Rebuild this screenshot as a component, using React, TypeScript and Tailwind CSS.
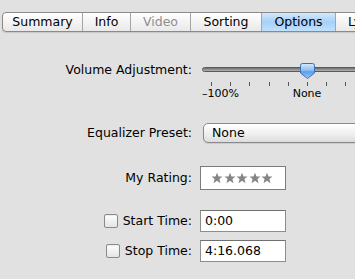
import React from "react";

const tabs = [
  { label: "Summary", w: "w-[80px]" },
  { label: "Info", w: "w-[48px]" },
  { label: "Video", w: "w-[60px]", disabled: true },
  { label: "Sorting", w: "w-[71px]" },
  { label: "Options", w: "w-[74px]", active: true },
  { label: "Lyrics", w: "w-[60px]" },
];

const Label = ({ children }: { children: React.ReactNode }) => (
  <div className="w-[192px] shrink-0 text-right leading-[16px]">{children}</div>
);

const Thumb = () => (
  <svg width="16" height="17" viewBox="0 0 16 17" className="absolute left-[98px] top-[1px]">
    <defs>
      <linearGradient id="thumb" x1="0" y1="0" x2="0" y2="1">
        <stop offset="0" stopColor="#d6e9fc" />
        <stop offset="0.45" stopColor="#8fc0f3" />
        <stop offset="0.55" stopColor="#5d9de8" />
        <stop offset="1" stopColor="#9ccbf7" />
      </linearGradient>
    </defs>
    <path
      d="M2.5 0.5 H12.5 Q14.5 0.5 14.5 2.5 V10 L7.5 15.5 L0.5 10 V2.5 Q0.5 0.5 2.5 0.5 Z"
      fill="url(#thumb)"
      stroke="#3d6db0"
      strokeWidth="1"
    />
  </svg>
);

const Star = () => (
  <svg width="12" height="12" viewBox="0 0 24 24" className="shrink-0">
    <path
      d="M12 1.5 L15 9 L23 9.2 L16.8 14.2 L19 22.3 L12 17.6 L5 22.3 L7.2 14.2 L1 9.2 L9 9 Z"
      fill="#858585"
    />
  </svg>
);

const VolumeSlider = () => {
  const ticks = Array.from({ length: 8 });
  return (
    <div className="relative h-[38px] w-[160px] shrink-0 ml-[10px]">
      <div className="mt-[5px] h-[5px] w-full rounded-full border border-[#5a5a5a] bg-gradient-to-b from-[#6e6e6e] to-[#b5b5b5]" />
      <div className="mt-[10px] ml-[9px] flex gap-[18.2px]">
        {ticks.map((_, i) => (
          <div key={i} className="h-[4px] w-[1px] bg-[#555]" />
        ))}
      </div>
      <span className="absolute left-[0px] top-[25px] text-[11px] leading-[13px]">–100%</span>
      <span className="absolute left-[105px] top-[25px] -translate-x-1/2 text-[11px] leading-[13px]">
        None
      </span>
      <Thumb />
    </div>
  );
};

const Checkbox = () => (
  <div className="h-[14px] w-[14px] shrink-0 rounded-[2px] border border-[#8a8a8a] bg-gradient-to-b from-white to-[#e4e4e4] shadow-[inset_0_1px_1px_rgba(0,0,0,0.08)]" />
);

const TimeField = ({ value }: { value: string }) => (
  <div className="ml-[8px] flex h-[22px] w-[86px] items-center border border-[#8d8d8d] border-t-[#6f6f6f] bg-white pl-[4px] leading-[16px]">
    {value}
  </div>
);

const App = () => {
  return (
    <div
      className="h-[279px] w-[355px] overflow-hidden bg-[#e1e1e1] text-[12.5px] text-black"
      style={{ fontFamily: '"Lucida Grande", "DejaVu Sans", sans-serif' }}
    >
      {/* tab strip */}
      <div className="ml-[2px] mt-[12px] flex h-[20px] w-[420px] overflow-hidden rounded-l-[4px] border border-[#8a8a8a] bg-gradient-to-b from-white to-[#e9e9e9] shadow-[0_1px_1px_rgba(0,0,0,0.12)]">
        {tabs.map((t) => (
          <div
            key={t.label}
            className={`${t.w} flex shrink-0 items-center justify-center border-r border-[#a5a5a5] leading-[16px] ${
              t.active ? "bg-gradient-to-b from-[#d3e8fd] via-[#a6d0f8] to-[#c2e0fc]" : ""
            } ${t.disabled ? "text-[#8e8e8e]" : ""}`}
          >
            {t.label}
          </div>
        ))}
      </div>

      {/* volume */}
      <div className="mt-[30px] flex items-start">
        <Label>Volume Adjustment:</Label>
        <VolumeSlider />
      </div>

      {/* equalizer */}
      <div className="mt-[23px] flex items-center">
        <Label>Equalizer Preset:</Label>
        <div className="ml-[11px] flex h-[20px] w-[170px] shrink-0 items-center rounded-l-[5px] border border-[#8a8a8a] bg-gradient-to-b from-white via-[#f1f1f1] to-[#dcdcdc] pl-[8px] leading-[16px] shadow-[0_1px_1px_rgba(0,0,0,0.1)]">
          None
        </div>
      </div>

      {/* rating */}
      <div className="mt-[23px] flex items-center">
        <Label>My Rating:</Label>
        <div className="ml-[8px] flex h-[24px] w-[86px] items-center gap-[0.6px] border border-[#7c7c7c] bg-white pl-[10px]">
          {[0, 1, 2, 3, 4].map((i) => (
            <Star key={i} />
          ))}
        </div>
      </div>

      {/* start / stop */}
      <div className="mt-[20px] flex items-center">
        <div className="flex w-[192px] shrink-0 items-center justify-end gap-[5px] leading-[16px]">
          <Checkbox />
          <span>Start Time:</span>
        </div>
        <TimeField value="0:00" />
      </div>
      <div className="mt-[8px] flex items-center">
        <div className="flex w-[192px] shrink-0 items-center justify-end gap-[5px] leading-[16px]">
          <Checkbox />
          <span>Stop Time:</span>
        </div>
        <TimeField value="4:16.068" />
      </div>
    </div>
  );
};

export default App;
